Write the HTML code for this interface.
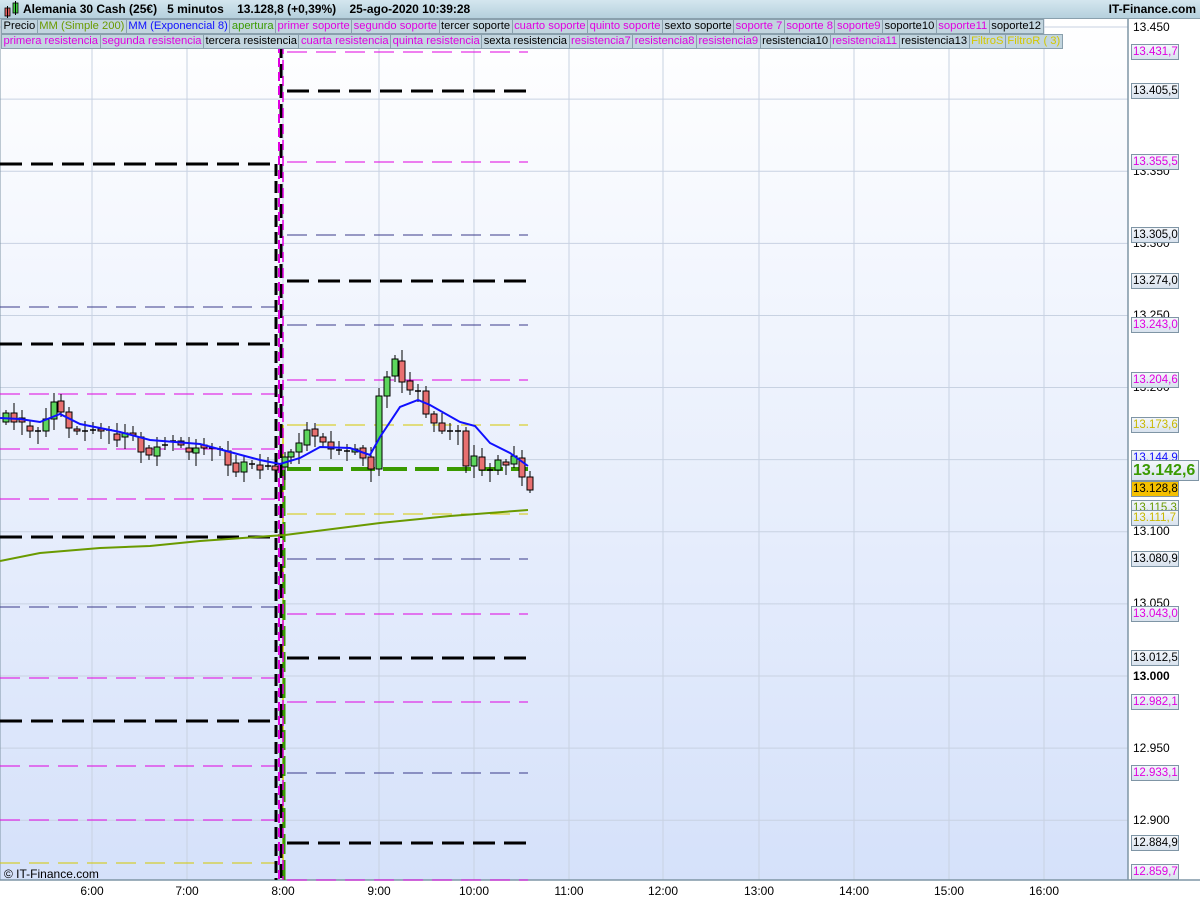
<!DOCTYPE html>
<html><head><meta charset="utf-8"><style>
*{margin:0;padding:0;box-sizing:border-box}
body{width:1200px;height:900px;overflow:hidden;background:#fff;font-family:"Liberation Sans",Arial,sans-serif;position:relative}
#hdr{position:absolute;left:0;top:0;width:1200px;height:19px;background:linear-gradient(#d4e6ef,#b5d0dd);border-bottom:1px solid #8aa0ad;font-size:12px;font-weight:bold;line-height:19px}
#hdr .t{position:absolute;left:23px;top:0}
#hdr .r{position:absolute;right:4px;top:0}
.row{position:absolute;left:1px;display:flex;height:15px;font-size:11.2px;line-height:13px}
.row span{background:#c2d5df;border:1px solid #8aa0ad;border-left:none;padding:0 1.5px;white-space:nowrap}
.row span:first-child{border-left:1px solid #8aa0ad}
.p{color:#e000e0}.k{color:#000}.o{color:#6a9a00}.b{color:#1010ff}.g{color:#3a9a00}.y{color:#d4c800}
svg{position:absolute;left:0;top:0}
.lb{position:absolute;left:1131px;width:48px;height:16px;border:1px solid #7f95a5;background:linear-gradient(#f4f7fb,#d8e2ee);font-size:11.5px;line-height:14px;padding-left:1px;white-space:nowrap;overflow:hidden}
.tk{position:absolute;left:1133px;font-size:12px;line-height:14px}
.tm{position:absolute;top:884px;font-size:12px;width:40px;text-align:center;margin-left:-20px}
</style></head><body>
<svg id="s" width="1200" height="900"></svg>
<div id="hdr"><svg width="20" height="19" style="left:2px;top:0"><rect x="3" y="8" width="5" height="8" fill="#e06060" stroke="#000" stroke-width="0.8"/><line x1="5.5" y1="6" x2="5.5" y2="18" stroke="#000"/><rect x="11" y="3" width="5" height="10" fill="#40d040" stroke="#000" stroke-width="0.8"/><line x1="13.5" y1="1" x2="13.5" y2="15" stroke="#000"/></svg><span class="t">Alemania 30 Cash (25€)&nbsp;&nbsp;&nbsp;5 minutos&nbsp;&nbsp;&nbsp;&nbsp;13.128,8 (+0,39%)&nbsp;&nbsp;&nbsp;&nbsp;25-ago-2020 10:39:28</span><span class="r">IT-Finance.com</span></div>
<div class="row" style="top:19px"><span class="k">Precio</span><span class="o">MM (Simple 200)</span><span class="b">MM (Exponencial 8)</span><span class="g">apertura</span><span class="p">primer soporte</span><span class="p">segundo soporte</span><span class="k">tercer soporte</span><span class="p">cuarto soporte</span><span class="p">quinto soporte</span><span class="k">sexto soporte</span><span class="p">soporte 7</span><span class="p">soporte 8</span><span class="p">soporte9</span><span class="k">soporte10</span><span class="p">soporte11</span><span class="k">soporte12</span></div>
<div class="row" style="top:34px"><span class="p">primera resistencia</span><span class="p">segunda resistencia</span><span class="k">tercera resistencia</span><span class="p">cuarta resistencia</span><span class="p">quinta resistencia</span><span class="k">sexta resistencia</span><span class="p">resistencia7</span><span class="p">resistencia8</span><span class="p">resistencia9</span><span class="k">resistencia10</span><span class="p">resistencia11</span><span class="k">resistencia13</span><span class="y">FiltroS</span><span class="y">FiltroR ( 3)</span></div>
<div style="position:absolute;left:4px;top:867px;font-size:12px">© IT-Finance.com</div>
<div id="lab"></div>
<script>
const s=document.getElementById('s');let h='';
h+='<defs><linearGradient id="bg" x1="0" y1="0" x2="0" y2="1"><stop offset="0" stop-color="#ffffff"/><stop offset="1" stop-color="#d5e1fa"/></linearGradient></defs>';
h+='<rect x="0" y="19" width="1128" height="861" fill="url(#bg)"/>';
const Y=p=>27+(13450-p)*1.4422;
for(let p=12900;p<=13450;p+=50){const y=Y(p);h+=`<line x1="0" y1="${y}" x2="1128" y2="${y}" stroke="#c8d2e2"/>`}
const hx=[92,187,283,379,474,569,663,759,854,949,1044];
hx.forEach(x=>h+=`<line x1="${x}" y1="19" x2="${x}" y2="880" stroke="#c8d2e2"/>`);
h+='<line x1="1128" y1="19" x2="1128" y2="880" stroke="#7f95a5" stroke-width="1.5"/><line x1="0" y1="880" x2="1200" y2="880" stroke="#7f95a5" stroke-width="1.5"/><line x1="0" y1="19" x2="0" y2="880" stroke="#7f95a5"/>';
const C={K:['#000',3,'22 9'],P:['#e000e0',1,'20 9'],D:['#3a3a8a',1,'20 9'],Y:['#d4c800',1,'20 9'],G:['#3a9a00',4,'24 8']};
function L(x1,x2,y,t){const c=C[t];h+=`<line x1="${x1}" y1="${y}" x2="${x2}" y2="${y}" stroke="${c[0]}" stroke-width="${c[1]}" stroke-dasharray="${c[2]}"/>`}
[[164,'K'],[307,'D'],[344,'K'],[394,'P'],[449,'P'],[499,'P'],[537,'K'],[607,'D'],[678,'P'],[721,'K'],[766,'P'],[820,'P'],[863,'Y']].forEach(a=>L(0,275,a[0],a[1]));
[[52,'P'],[91,'K'],[162,'P'],[235,'D'],[281,'K'],[325,'D'],[380,'P'],[425,'Y'],[469,'G'],[514,'Y'],[559,'D'],[614,'P'],[658,'K'],[702,'P'],[773,'D'],[843,'K'],[880,'P']].forEach(a=>L(287,528,a[0],a[1]));
h+='<path d="M283 425 V880" stroke="#d4c800" stroke-width="1.5" fill="none"/>';
h+='<path d="M284 470 V880" stroke="#3a9a00" stroke-width="3" stroke-dasharray="20 6" fill="none"/>';
h+='<path d="M276 164 V880" stroke="#000" stroke-width="3" stroke-dasharray="12 5" fill="none"/>';
h+='<path d="M281 44 V880" stroke="#000" stroke-width="3" stroke-dasharray="14 6" fill="none"/>';
h+='<path d="M279 44 V880" stroke="#e000e0" stroke-width="2" stroke-dasharray="9 5" fill="none"/>';
h+='<path d="M283 44 V880" stroke="#e000e0" stroke-width="1.5" stroke-dasharray="10 6" fill="none"/>';
h+='<polyline points="0,561 40,553 100,548 150,546 200,541 285,535 380,523 450,516 528,510" fill="none" stroke="#6a9a00" stroke-width="2"/>';
const cd=[[6,413,422,'g'],[14,413,422,'r'],[22,418,422,'r'],[30,426,431,'r'],[38,431,432,'d'],[46,419,431,'g'],[54,402,419,'g'],[61,401,412,'r'],[69,412,428,'r'],[77,429,431,'r'],[85,431,432,'d'],[93,430,431,'d'],[101,429,431,'r'],[109,430,431,'d'],[117,434,440,'r'],[125,433,437,'g'],[133,433,435,'r'],[141,437,452,'r'],[149,448,455,'r'],[157,447,456,'g'],[165,445,446,'d'],[173,441,442,'d'],[181,441,445,'r'],[189,448,452,'r'],[196,448,453,'g'],[204,445,448,'r'],[212,448,449,'d'],[220,449,450,'d'],[228,451,465,'r'],[236,463,472,'r'],[244,462,472,'g'],[252,464,465,'d'],[260,465,470,'r'],[268,466,467,'d'],[275,466,470,'r'],
[285,457,467,'g'],[291,452,457,'g'],[299,443,452,'g'],[307,430,445,'g'],[315,429,436,'r'],[323,437,442,'r'],[331,442,449,'r'],[339,450,451,'d'],[347,451,452,'d'],[355,449,452,'g'],[363,448,458,'r'],[371,457,469,'r'],[379,396,469,'g'],[387,377,396,'g'],[395,359,376,'g'],[402,361,382,'r'],[410,381,390,'r'],[418,391,392,'d'],[426,391,414,'r'],[434,414,423,'r'],[442,423,431,'r'],[450,431,432,'d'],[458,431,432,'d'],[466,431,466,'r'],[474,456,466,'g'],[482,457,470,'r'],[490,470,471,'d'],[498,460,470,'g'],[506,462,465,'r'],[514,456,464,'g'],[522,458,477,'r'],[530,477,490,'r']];
cd.forEach((c,i)=>{const [x,t,b,k]=c;const wt=t-(3+(i*7)%9),wb=b+(3+(i*5)%11);h+=`<line x1="${x}" y1="${wt}" x2="${x}" y2="${wb}" stroke="#000"/>`;
if(k=='d')h+=`<line x1="${x-3}" y1="${t}" x2="${x+3}" y2="${t}" stroke="#000" stroke-width="1.5"/>`;else h+=`<rect x="${x-3}" y="${t}" width="6" height="${b-t}" fill="${k=='g'?'#5cd65c':'#e87070'}" stroke="#000"/>`});
h+='<polyline points="0,418 20,419 40,422 60,414 80,424 100,428 120,432 150,440 200,444 230,452 260,460 280,464 300,458 320,447 350,448 370,455 380,437 400,407 418,400 430,405 460,422 475,426 490,443 510,453 528,466" fill="none" stroke="#1010ff" stroke-width="2"/>';
s.innerHTML=h;
let l='';
[[13450,27],[13350,171],[13300,243],[13250,315],[13200,387],[13150,459],[13100,531],[13050,603],[12950,748],[12900,820]].forEach(a=>{l+=`<div class="tk" style="top:${a[1]-7}px">${(a[0]/1000).toFixed(3)}</div>`});
l+='<div class="tk" style="top:669px;font-weight:bold">13.000</div>';
const B=[['13.431,7',52,'#e000e0'],['13.405,5',91,'#000'],['13.355,5',162,'#e000e0'],['13.305,0',235,'#000'],['13.274,0',281,'#000'],['13.243,0',325,'#e000e0'],['13.204,6',380,'#e000e0'],['13.173,6',425,'#c8b800'],['13.144,9',458,'#1010ff'],['13.115,3',508,'#6a9a00'],['13.111,7',518,'#c8b800'],['13.080,9',559,'#000'],['13.043,0',614,'#e000e0'],['13.012,5',658,'#000'],['12.982,1',702,'#e000e0'],['12.933,1',773,'#e000e0'],['12.884,9',843,'#000'],['12.859,7',872,'#e000e0']];
B.forEach(b=>{l+=`<div class="lb" style="top:${b[1]-8}px;color:${b[2]}">${b[0]}</div>`});
l+='<div class="lb" style="top:481px;background:#f5c000;color:#000">13.128,8</div>';
l+='<div class="lb" style="top:460px;width:68px;height:21px;font-size:16px;line-height:19px;font-weight:bold;color:#3a9a00">13.142,6</div>';
[['6:00',92],['7:00',187],['8:00',283],['9:00',379],['10:00',474],['11:00',569],['12:00',663],['13:00',759],['14:00',854],['15:00',949],['16:00',1044]].forEach(t=>l+=`<div class="tm" style="left:${t[1]}px">${t[0]}</div>`);
document.getElementById('lab').innerHTML=l;
</script>
</body></html>
